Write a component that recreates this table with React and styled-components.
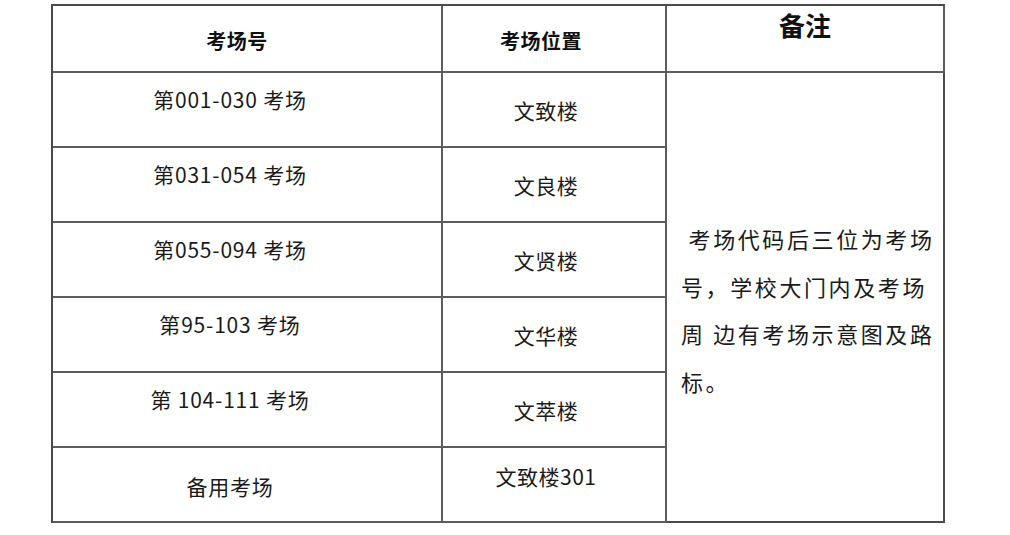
import React from 'react';
import styled, { createGlobalStyle } from 'styled-components';

const GlobalStyle = createGlobalStyle`
  html, body {
    margin: 0;
    padding: 0;
    background: #ffffff;
  }
  body {
    font-family: "Noto Sans CJK SC", "Noto Sans", sans-serif;
    color: #1a1a1a;
  }
`;

const Page = styled.div`
  padding: 4px 0 0 51px;
  width: 1010px;
  height: 535px;
  box-sizing: border-box;
`;

const Grid = styled.div`
  display: grid;
  grid-template-columns: 390px 224px 278px;
  grid-template-rows: 67px repeat(6, 75px);
  border-top: 2px solid #4a4a4a;
  border-left: 2px solid #4a4a4a;
  width: max-content;
`;

const Cell = styled.div`
  box-sizing: border-box;
  border-right: 2px solid #5c5c5c;
  border-bottom: 2px solid #5c5c5c;
  display: flex;
  justify-content: center;
  align-items: flex-start;
  padding-top: ${(p) => p.$top}px;
  padding-right: ${(p) => p.$shift || 0}px;
  font-size: 21px;
  line-height: 24px;
  letter-spacing: ${(p) => p.$track || 0}px;
  white-space: nowrap;
`;

const HeadCell = styled(Cell)`
  font-weight: 700;
  color: #111;
  font-size: ${(p) => (p.$big ? 26 : 20)}px;
  line-height: ${(p) => (p.$big ? 30 : 24)}px;
`;

const NoteCell = styled.div`
  grid-column: 3;
  grid-row: 2 / span 6;
  box-sizing: border-box;
  border-right: 2px solid #4a4a4a;
  border-bottom: 2px solid #4a4a4a;
  padding: 142px 0 0 14px;
  font-size: 22px;
  line-height: 47.5px;
  letter-spacing: 2.6px;
`;

const Line = styled.div`
  white-space: pre;
`;

const rows = [
  { no: '第001-030 考场', place: '文致楼', a: 14, b: 25 },
  { no: '第031-054 考场', place: '文良楼', a: 14, b: 25 },
  { no: '第055-094 考场', place: '文贤楼', a: 14, b: 25 },
  { no: '第95-103 考场', place: '文华楼', a: 14, b: 25 },
  { no: '第 104-111 考场', place: '文萃楼', a: 14, b: 25 },
  { no: '备用考场', place: '文致楼301', a: 26, b: 16 },
];

const noteLines = [' 考场代码后三位为考场', '号，学校大门内及考场', '周 边有考场示意图及路', '标。'];

export default function App() {
  return (
    <>
      <GlobalStyle />
      <Page>
        <Grid>
          <HeadCell $top={23} $shift={20} $track={0.5}>考场号</HeadCell>
          <HeadCell $top={23} $shift={26} $track={0.5}>考场位置</HeadCell>
          <HeadCell $top={4} $big>备注</HeadCell>
          {rows.map((r, i) => (
            <React.Fragment key={i}>
              <Cell style={{ gridRow: i + 2, gridColumn: 1 }} $top={r.a} $shift={34} $track={0.8}>{r.no}</Cell>
              <Cell style={{ gridRow: i + 2, gridColumn: 2 }} $top={r.b} $shift={16} $track={0.5}>{r.place}</Cell>
            </React.Fragment>
          ))}
          <NoteCell>
            {noteLines.map((l, i) => <Line key={i}>{l}</Line>)}
          </NoteCell>
        </Grid>
      </Page>
    </>
  );
}
